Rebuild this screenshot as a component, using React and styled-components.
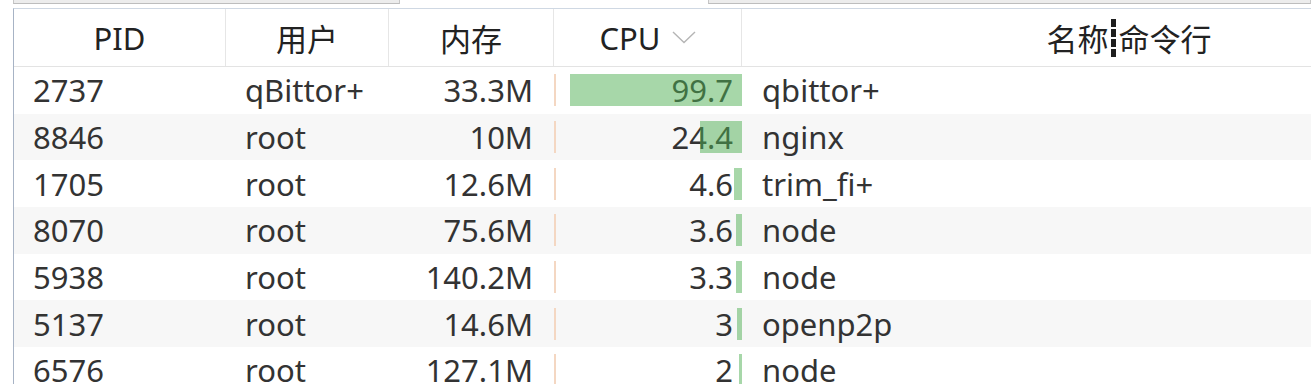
import React from 'react';
import styled, { createGlobalStyle } from 'styled-components';

const GlobalStyle = createGlobalStyle`
	body {
		margin: 0;
		background: #fff;
		overflow: hidden;
		font-family: "Noto Sans", "Noto Sans CJK SC", sans-serif;
	}
`

const Page = styled.div`
	width: 1311px;
	height: 384px;
	overflow: hidden;
`

const TopStrip = styled.div`
	display: flex;
	height: 8px;
	padding-left: 13px;
`

const StripBar = styled.div`
	box-sizing: border-box;
	height: 4px;
	width: ${props => props.$w ? props.$w + 'px' : 'auto'};
	flex: ${props => props.$w ? 'none' : '1'};
	margin-left: ${props => props.$gap || 0}px;
	background: #ececec;
	border-bottom: 1px solid #bdbdbd;
	border-left: 1px solid #c6c6c6;
	border-right: 1px solid #c6c6c6;
`

const Table = styled.div`
	margin-left: 13px;
	border-left: 1px solid #a7b3c5;
	border-top: 1px solid #cfd8e3;
	width: 1600px;
`

const Grid = styled.div`
	display: grid;
	grid-template-columns: 212px 163px 165px 188px 774px;
	background: ${props => props.$alt ? '#f7f7f7' : '#fff'};
`

const HeaderRow = styled(Grid)`
	height: 57px;
	border-bottom: 1px solid #e3e3e3;
`

const HeadCell = styled.div`
	box-sizing: border-box;
	display: flex;
	align-items: center;
	justify-content: center;
	gap: 11px;
	font-size: 31px;
	color: #222;
	border-right: ${props => props.$last ? 'none' : '1px solid #e6e6e6'};
`

const Divider = styled.span`
	display: inline-block;
	width: 5px;
	height: 38px;
	margin: 0 3px 0 2px;
	background: repeating-linear-gradient(to bottom, #1e1e1e 0 8px, transparent 8px 10px);
`

const NameHead = styled.span`
	display: flex;
	align-items: center;
`

const Row = styled(Grid)`
	height: 46.67px;
`

const Cell = styled.div`
	box-sizing: border-box;
	display: flex;
	align-items: center;
	justify-content: ${props => props.$right ? 'flex-end' : 'flex-start'};
	padding-left: ${props => props.$pl || 0}px;
	padding-right: ${props => props.$pr || 0}px;
	font-size: 31px;
	color: #333;
	white-space: nowrap;
`

const CpuCell = styled.div`
	display: flex;
	align-items: center;
`

const MemLine = styled.div`
	width: 2px;
	height: 32px;
	background: #f4d7c2;
`

const CpuArea = styled.div`
	position: relative;
	box-sizing: border-box;
	width: 173px;
	margin-left: 13px;
	height: 32px;
	display: flex;
	align-items: center;
	justify-content: flex-end;
	padding-right: 9px;
	font-size: 31px;
	color: #333;
`

const CpuBar = styled.div`
	position: absolute;
	top: 0;
	right: 0;
	bottom: 0;
	background: rgba(80, 176, 84, 0.5);
`

const Chevron = () => (
	<svg width="24" height="13" viewBox="0 0 24 13">
		<polyline points="1,1 12,11.5 23,1" fill="none" stroke="#b5b5b5" strokeWidth="1.4" />
	</svg>
)

const processes = [
	{ pid: 2737, user: 'qBittor+', mem: '33.3M', cpu: 99.7, name: 'qbittor+' },
	{ pid: 8846, user: 'root', mem: '10M', cpu: 24.4, name: 'nginx' },
	{ pid: 1705, user: 'root', mem: '12.6M', cpu: 4.6, name: 'trim_fi+' },
	{ pid: 8070, user: 'root', mem: '75.6M', cpu: 3.6, name: 'node' },
	{ pid: 5938, user: 'root', mem: '140.2M', cpu: 3.3, name: 'node' },
	{ pid: 5137, user: 'root', mem: '14.6M', cpu: 3, name: 'openp2p' },
	{ pid: 6576, user: 'root', mem: '127.1M', cpu: 2, name: 'node' },
]

export default function App(){
	return(
		<Page>
			<GlobalStyle />
			<TopStrip>
				<StripBar $w={387} />
				<StripBar $gap={308} />
			</TopStrip>
			<Table>
				<HeaderRow>
					<HeadCell>PID</HeadCell>
					<HeadCell>用户</HeadCell>
					<HeadCell>内存</HeadCell>
					<HeadCell>CPU<Chevron /></HeadCell>
					<HeadCell $last>
						<NameHead>名称<Divider />命令行</NameHead>
					</HeadCell>
				</HeaderRow>
				{processes.map((p, i) => (
					<Row key={p.pid} $alt={i % 2 === 1}>
						<Cell $pl={19}>{p.pid}</Cell>
						<Cell $pl={19}>{p.user}</Cell>
						<Cell $right $pr={21}>{p.mem}</Cell>
						<CpuCell>
							<MemLine />
							<CpuArea>
								{p.cpu}
								<CpuBar style={{ width: (173 * p.cpu / 100) + 'px' }} />
							</CpuArea>
						</CpuCell>
						<Cell $pl={20}>{p.name}</Cell>
					</Row>
				))}
			</Table>
		</Page>
	)
}
